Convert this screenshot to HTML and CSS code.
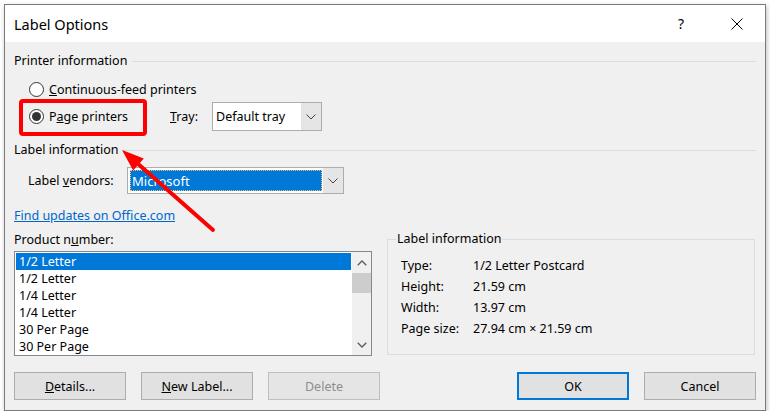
FILE: index.html
```html
<!DOCTYPE html>
<html lang="en">

<head>
    <meta charset="UTF-8">
    <title>Label Options</title>
    <link rel="stylesheet" href="styles.css">
</head>

<body>
    <div class="dialog">
        <div class="titlebar">
            <span class="title">Label Options</span>
            <span class="help">?</span>
            <span class="close">
                <svg width="12" height="12" viewBox="0 0 12 12"><path d="M0.5 0.5 L11.5 11.5 M11.5 0.5 L0.5 11.5" stroke="#000" stroke-width="1" fill="none"/></svg>
            </span>
        </div>

        <div class="content">
            <div class="section-title">Printer information</div>

            <div class="radio-row">
                <label class="radio"><span class="circle"></span><span><u>C</u>ontinuous-feed printers</span></label>
            </div>
            <div class="radio-row tray-row">
                <label class="radio"><span class="circle checked"></span><span>P<u>a</u>ge printers</span></label>
                <span class="tray-label"><u>T</u>ray:</span>
                <div class="combo tray-combo">
                    <span class="combo-text">Default tray</span>
                    <span class="combo-btn">
                        <svg width="10" height="6" viewBox="0 0 10 6"><path d="M0.5 0.5 L5 5 L9.5 0.5" stroke="#444" fill="none"/></svg>
                    </span>
                </div>
            </div>

            <div class="section-title second">Label information</div>

            <div class="vendor-row">
                <span class="vendor-label">Label <u>v</u>endors:</span>
                <div class="combo vendor-combo">
                    <span class="combo-text selected">Microsoft</span>
                    <span class="combo-btn">
                        <svg width="10" height="6" viewBox="0 0 10 6"><path d="M0.5 0.5 L5 5 L9.5 0.5" stroke="#444" fill="none"/></svg>
                    </span>
                </div>
            </div>

            <a class="link" href="#">Find updates on Office.com</a>

            <div class="lower">
                <div class="product">
                    <div class="product-label">Product n<u>u</u>mber:</div>
                    <div class="listbox">
                        <div class="items">
                            <div class="item active">1/2 Letter</div>
                            <div class="item">1/2 Letter</div>
                            <div class="item">1/4 Letter</div>
                            <div class="item">1/4 Letter</div>
                            <div class="item">30 Per Page</div>
                            <div class="item">30 Per Page</div>
                        </div>
                        <div class="scrollbar">
                            <span class="arrow">
                                <svg width="10" height="6" viewBox="0 0 10 6"><path d="M0.7 5.3 L5 1 L9.3 5.3" stroke="#606060" stroke-width="1.4" fill="none"/></svg>
                            </span>
                            <span class="thumb"></span>
                            <span class="track"></span>
                            <span class="arrow">
                                <svg width="10" height="6" viewBox="0 0 10 6"><path d="M0.7 0.7 L5 5 L9.3 0.7" stroke="#606060" stroke-width="1.4" fill="none"/></svg>
                            </span>
                        </div>
                    </div>
                </div>

                <fieldset class="info">
                    <legend>Label information</legend>
                    <div class="info-grid">
                        <span>Type:</span><span>1/2 Letter Postcard</span>
                        <span>Height:</span><span>21.59 cm</span>
                        <span>Width:</span><span>13.97 cm</span>
                        <span>Page size:</span><span>27.94 cm × 21.59 cm</span>
                    </div>
                </fieldset>
            </div>

            <div class="buttons">
                <button class="btn"><u>D</u>etails...</button>
                <button class="btn"><u>N</u>ew Label...</button>
                <button class="btn" disabled>Delete</button>
                <button class="btn default push">OK</button>
                <button class="btn">Cancel</button>
            </div>
        </div>

        <!-- annotation drawn over the dialog -->
        <svg class="annotation" width="760" height="404" viewBox="0 0 760 404">
            <rect x="16" y="96" width="124" height="33" rx="2" fill="none" stroke="#ff0000" stroke-width="4"/>
            <line x1="208" y1="225" x2="132" y2="158" stroke="#ff0000" stroke-width="4" stroke-linecap="round"/>
            <polygon points="117,145 128.2,165.5 138.8,153.5" fill="#ff0000"/>
        </svg>
    </div>
</body>

</html>
```

FILE: styles.css
```css
body {
    margin: 0;
    background: #fff;
    font-family: "Noto Sans", "Liberation Sans", sans-serif;
    font-size: 12.5px;
    color: #000;
}

.dialog {
    position: relative;
    box-sizing: border-box;
    width: 762px;
    height: 407px;
    margin: 4px 0 0 4px;
    background: #f0f0f0;
    border: 1px solid #7a7a7a;
    box-shadow: 1px 2px 5px rgba(0, 0, 0, 0.25);
}

.titlebar {
    display: flex;
    align-items: center;
    height: 37px;
    background: #fff;
}

.title {
    flex: 1;
    padding-left: 9px;
    font-size: 14.5px;
}

.help {
    width: 46px;
    text-align: center;
    font-size: 14px;
}

.close {
    display: flex;
    justify-content: center;
    width: 46px;
    margin: 0 5px 0 10px;
}

.content {
    padding: 11px 9px 0 9px;
}

.section-title {
    display: flex;
    align-items: center;
    height: 16px;
    line-height: 16px;
}

.section-title::after {
    content: "";
    flex: 1;
    border-top: 1px solid #dcdcdc;
    margin-left: 5px;
}

.section-title.second {
    margin-top: 11px;
}

.radio-row {
    display: flex;
    align-items: center;
    height: 20px;
    margin-top: 10px;
    padding-left: 15px;
}

.tray-row {
    height: 29px;
    margin-top: 3px;
}

.radio {
    display: flex;
    align-items: center;
    gap: 5px;
}

.tray-row .radio {
    width: 141px;
}

.circle {
    box-sizing: border-box;
    display: flex;
    align-items: center;
    justify-content: center;
    width: 15px;
    height: 15px;
    border: 1px solid #333;
    border-radius: 50%;
    background: #fff;
}

.circle.checked::after {
    content: "";
    width: 9px;
    height: 9px;
    border-radius: 50%;
    background: #333;
}

.tray-label {
    width: 42px;
}

.combo {
    box-sizing: border-box;
    display: flex;
    border: 1px solid #adadad;
    background: #fff;
}

.tray-combo {
    width: 110px;
    height: 29px;
}

.combo-text {
    flex: 1;
    display: flex;
    align-items: center;
    padding-left: 3px;
}

.combo-text.selected {
    margin: 2px 1px 2px 2px;
    padding-left: 2px;
    background: #0078d7;
    color: #fff;
    outline: 1px dotted #f5c36a;
    outline-offset: -1px;
    font-size: 13px;
}

.combo-btn {
    display: flex;
    align-items: center;
    justify-content: center;
    width: 20px;
    background: #e5e5e5;
}

.vendor-row {
    display: flex;
    align-items: center;
    height: 27px;
    margin-top: 9px;
    padding-left: 14px;
}

.vendor-label {
    width: 99px;
}

.vendor-combo {
    width: 217px;
    height: 27px;
}

.link {
    display: block;
    margin-top: 14px;
    width: max-content;
    line-height: 16px;
    color: #0066cc;
}

.lower {
    display: flex;
    gap: 15px;
    margin-top: 8px;
}

.product {
    width: 358px;
}

.product-label {
    line-height: 16px;
}

.listbox {
    box-sizing: border-box;
    display: flex;
    height: 105px;
    margin-top: 3px;
    border: 1px solid #828790;
    background: #fff;
}

.items {
    flex: 1;
    padding: 1px;
    overflow: hidden;
}

.item {
    height: 17px;
    line-height: 17px;
    padding-left: 3px;
}

.item.active {
    background: #0078d7;
    color: #fff;
}

.scrollbar {
    display: flex;
    flex-direction: column;
    width: 19px;
    background: #f0f0f0;
}

.arrow {
    display: flex;
    align-items: center;
    justify-content: center;
    height: 21px;
}

.thumb {
    height: 20px;
    background: #cdcdcd;
}

.track {
    flex: 1;
}

.info {
    box-sizing: border-box;
    width: 368px;
    height: 123px;
    margin: 0;
    padding: 0 0 0 8px;
    border: 1px solid #dcdcdc;
    min-width: 0;
}

.info legend {
    padding: 0 1px;
    line-height: 14px;
}

.info-grid {
    display: grid;
    grid-template-columns: 72px 1fr;
    grid-auto-rows: 21px;
    align-items: center;
    margin-top: 9px;
    padding-left: 5px;
}

.buttons {
    display: flex;
    gap: 15px;
    margin-top: 16px;
}

.btn {
    box-sizing: border-box;
    width: 112px;
    height: 28px;
    padding: 0;
    font-family: inherit;
    font-size: 12.5px;
    color: #000;
    background: #e1e1e1;
    border: 1px solid #adadad;
}

.btn:disabled {
    color: #8d8d8d;
    border-color: #bfbfbf;
    background: #e5e5e5;
}

.btn.default {
    border: 2px solid #0078d7;
}

.btn.push {
    margin-left: auto;
}

.annotation {
    position: absolute;
    left: 0;
    top: 0;
    pointer-events: none;
}
```
